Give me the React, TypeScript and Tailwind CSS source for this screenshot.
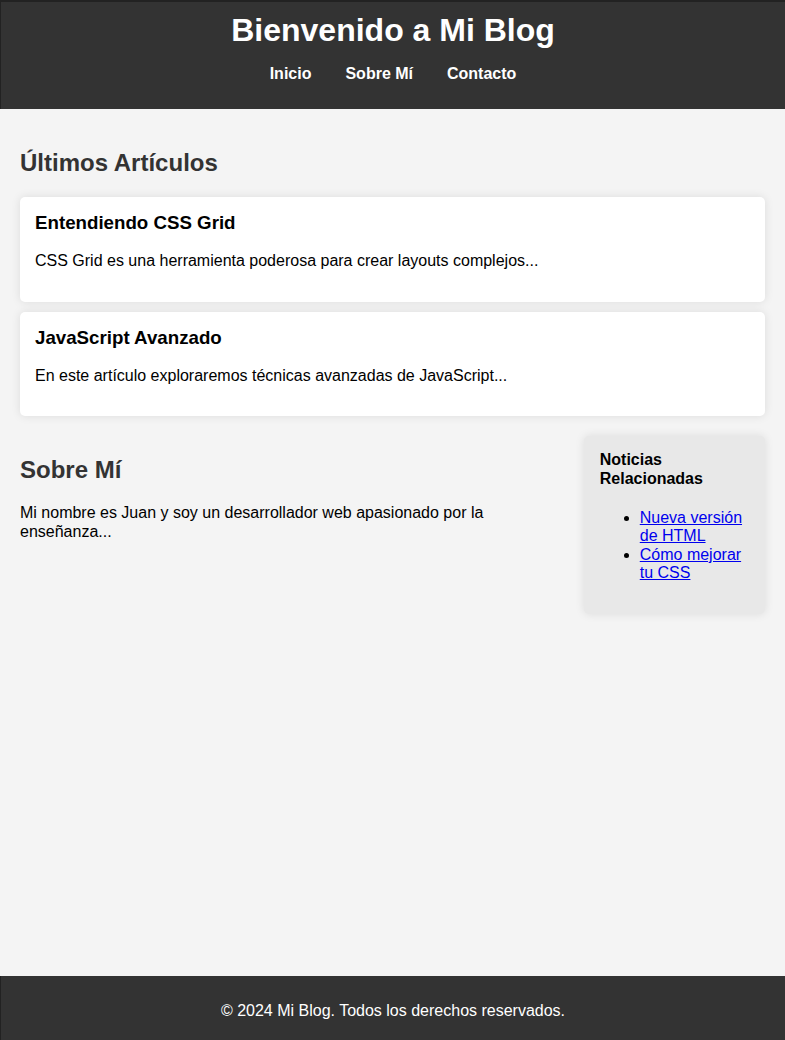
const ARTICLES = [
  {
    title: "Entendiendo CSS Grid",
    text: "CSS Grid es una herramienta poderosa para crear layouts complejos...",
  },
  {
    title: "JavaScript Avanzado",
    text: "En este artículo exploraremos técnicas avanzadas de JavaScript...",
  },
];

const NEWS = ["Nueva versión de HTML", "Cómo mejorar tu CSS"];

export default function App() {
  return (
    <div className="min-h-screen flex flex-col bg-[#f4f4f4] font-['Liberation_Sans',Arial,sans-serif] text-black">
      <header className="bg-[#333] text-white border-t-2 border-l border-[#222] pt-[10px] pb-[26px] text-center">
        <h1 className="text-[32px] leading-[37px] font-bold">Bienvenido a Mi Blog</h1>
        <nav className="mt-[16px] flex justify-center gap-[34px] text-base leading-[18px] font-bold">
          <a href="#">Inicio</a>
          <a href="#">Sobre Mí</a>
          <a href="#">Contacto</a>
        </nav>
      </header>

      <main className="flex-1 grid grid-cols-[3fr_1fr] content-start gap-5 p-5 items-start">
        <section className="col-span-2">
          <h2 className="text-2xl leading-[28px] font-bold text-[#333] mt-[20px] mb-[20px]">Últimos Artículos</h2>
          <div className="flex flex-col gap-[10px]">
            {ARTICLES.map((a) => (
              <article key={a.title} className="bg-white rounded-[5px] shadow-[0_0_10px_rgba(0,0,0,0.1)] p-[15px]">
                <h3 className="text-[18.72px] leading-[21.5px] font-bold">{a.title}</h3>
                <p className="mt-[18.7px] mb-4 text-base leading-[18.4px]">{a.text}</p>
              </article>
            ))}
          </div>
        </section>

        <section>
          <h2 className="text-2xl leading-[28px] font-bold text-[#333] mt-[20px] mb-[20px]">Sobre Mí</h2>
          <p className="text-base leading-[18.4px]">
            Mi nombre es Juan y soy un desarrollador web apasionado por la enseñanza...
          </p>
        </section>

        <aside className="bg-[#e8e8e8] rounded-[5px] shadow-[0_0_10px_rgba(0,0,0,0.1)] p-[15px] pl-[16px]">
          <h4 className="text-base leading-[18.4px] font-bold">Noticias Relacionadas</h4>
          <ul className="list-disc pl-10 mt-[21px] mb-4 text-base leading-[18.4px]">
            {NEWS.map((n) => (
              <li key={n}>
                <a href="#" className="text-[#0000ee] underline">{n}</a>
              </li>
            ))}
          </ul>
        </aside>
      </main>

      <footer className="bg-[#333] text-white border-l border-[#222] pt-[26px] pb-[20px] text-center">
        <p className="text-base leading-[18px]">© 2024 Mi Blog. Todos los derechos reservados.</p>
      </footer>
    </div>
  );
}
